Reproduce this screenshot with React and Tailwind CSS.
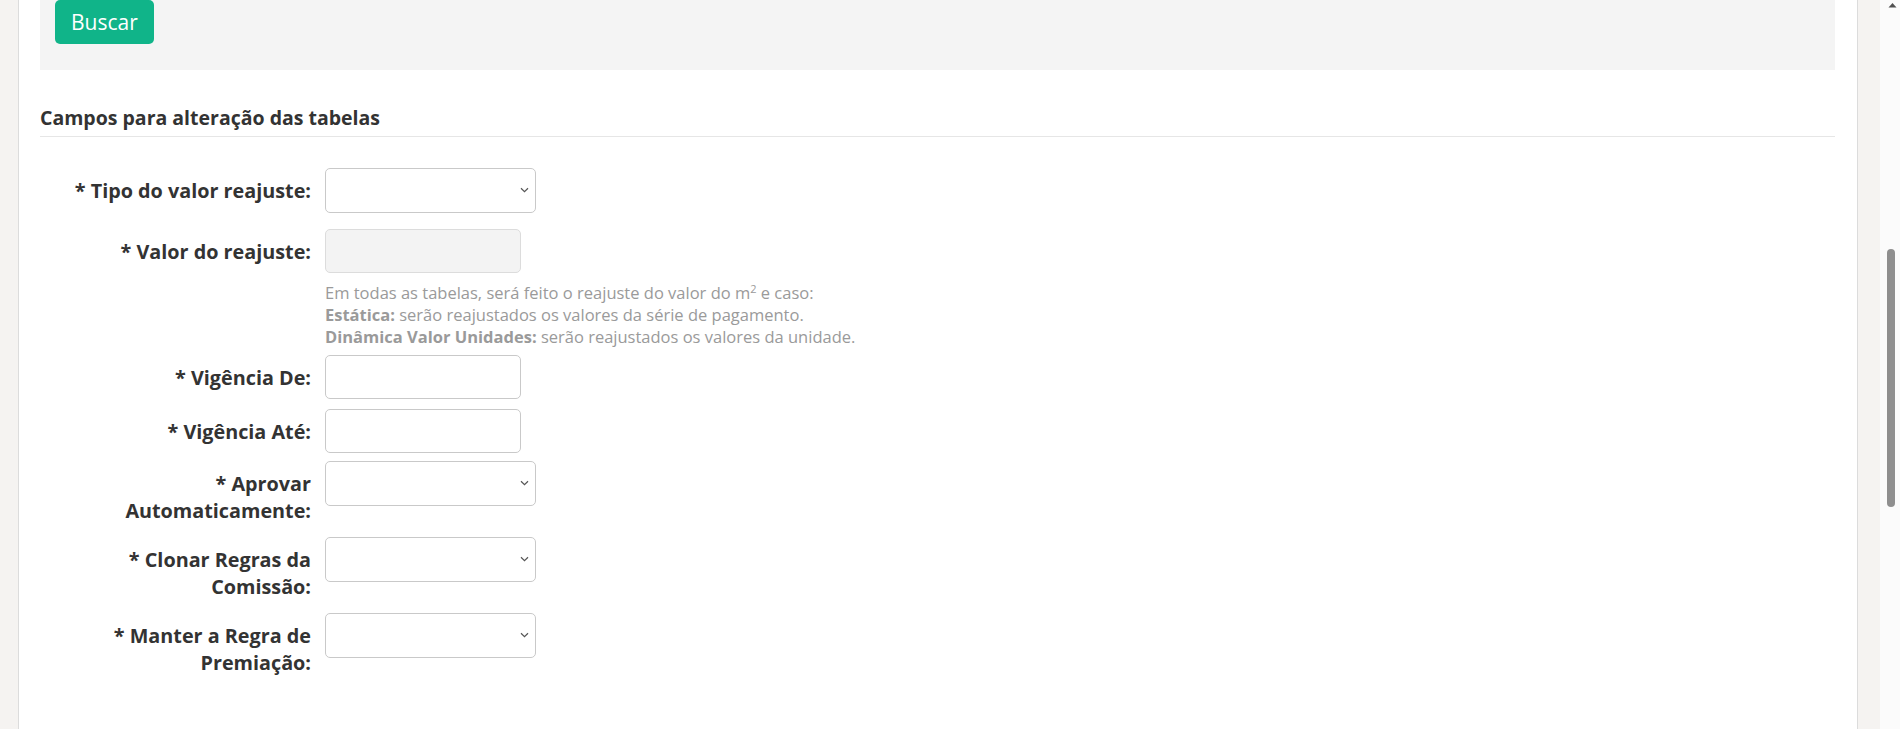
import React from 'react';

const font = { fontFamily: '"Open Sans", "Noto Sans", sans-serif' };

const Chevron = () => (
  <svg className="pointer-events-none absolute right-[7px] top-1/2 -translate-y-1/2" width="9" height="6" viewBox="0 0 9 6">
    <path d="M1 1.2 L4.5 4.6 L8 1.2" fill="none" stroke="#555" strokeWidth="1.2" />
  </svg>
);

const SelectBox = () => (
  <div className="relative h-[45px] w-[211px]">
    <select className="h-full w-full appearance-none rounded-[5px] border border-[#c9c9c9] bg-white px-3 text-[17px] text-[#333] outline-none" defaultValue="">
      <option value=""></option>
    </select>
    <Chevron />
  </div>
);

const TextBox = ({ disabled }) => (
  <input
    type="text"
    disabled={disabled}
    className={`h-[44px] w-[196px] rounded-[5px] border px-3 text-[17px] text-[#333] outline-none ${
      disabled ? 'border-[#dcdcdc] bg-[#f3f3f3]' : 'border-[#c9c9c9] bg-white'
    }`}
  />
);

const Label = ({ children }) => (
  <label className="w-[271px] shrink-0 pt-[9px] text-right text-[19.8px] font-bold leading-[27px] text-[#333]">
    {children}
  </label>
);

const App = () => {
  return (
    <div className="flex h-[729px] w-full overflow-hidden bg-[#f5f3f1]" style={font}>
      {/* Page */}
      <div className="flex-1 overflow-hidden pl-[18px] pr-[22px]">
        <div className="h-full border-x border-[#dcdcdc] bg-white pl-[21px] pr-[22px]">
          {/* Search panel */}
          <div className="bg-[#f4f4f4] pb-[26px] pl-[15px]">
            <button className="h-[44px] rounded-[5px] bg-[#10b489] px-[16px] text-[21px] leading-none text-white">
              Buscar
            </button>
          </div>

          {/* Section title */}
          <div className="mt-[34px] border-b border-[#e6e6e6] pb-[4.5px]">
            <h3 className="text-[19.5px] font-bold leading-[27px] text-[#333]">Campos para alteração das tabelas</h3>
          </div>

          {/* Form */}
          <div className="pt-[31px]">
            <div className="flex items-start gap-[14px]">
              <Label>* Tipo do valor reajuste:</Label>
              <SelectBox />
            </div>

            <div className="mt-[16px] flex items-start gap-[14px]">
              <Label>* Valor do reajuste:</Label>
              <div>
                <TextBox disabled />
                <p className="mt-[9px] text-[16.5px] leading-[22px] text-[#9a9a9a]">
                  Em todas as tabelas, será feito o reajuste do valor do m<sup className="text-[11px]">2</sup> e caso:
                  <br />
                  <b>Estática:</b> serão reajustados os valores da série de pagamento.
                  <br />
                  <b>Dinâmica Valor Unidades:</b> serão reajustados os valores da unidade.
                </p>
              </div>
            </div>

            <div className="mt-[7px] flex items-start gap-[14px]">
              <Label>* Vigência De:</Label>
              <TextBox />
            </div>

            <div className="mt-[10px] flex items-start gap-[14px]">
              <Label>* Vigência Até:</Label>
              <TextBox />
            </div>

            <div className="mt-[8px] flex items-start gap-[14px]">
              <Label>
                * Aprovar
                <br />
                Automaticamente:
              </Label>
              <SelectBox />
            </div>

            <div className="mt-[13px] flex items-start gap-[14px]">
              <Label>
                * Clonar Regras da
                <br />
                Comissão:
              </Label>
              <SelectBox />
            </div>

            <div className="mt-[13px] flex items-start gap-[14px]">
              <Label>
                * Manter a Regra de
                <br />
                Premiação:
              </Label>
              <SelectBox />
            </div>
          </div>
        </div>
      </div>

      {/* Scrollbar */}
      <div className="relative w-[20px] shrink-0 bg-[#fbfbfb]">
        <svg className="absolute left-[8px] top-[2px]" width="9" height="6" viewBox="0 0 9 6">
          <path d="M0.5 5.5 L4.5 1 L8.5 5.5 Z" fill="#505050" />
        </svg>
        <div className="absolute left-[7px] top-[249px] h-[258px] w-[8px] rounded-full bg-[#8f8f8f]" />
      </div>
    </div>
  );
};

export default App;
